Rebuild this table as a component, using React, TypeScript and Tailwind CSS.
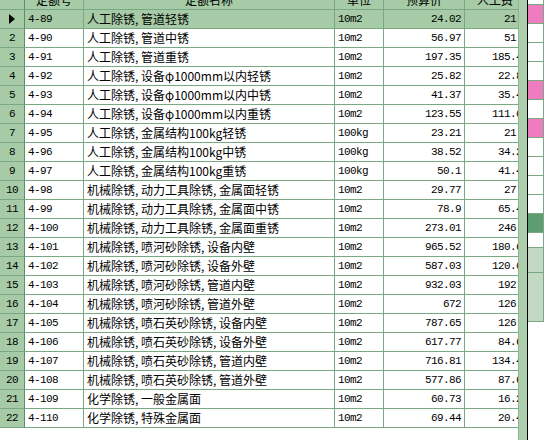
import React from 'react';

type Row = {
  code: string;
  name: string;
  unit: string;
  price: string;
  labor: string;
};

const rows: Row[] = [
  { code: '4-89', name: '人工除锈, 管道轻锈', unit: '10m2', price: '24.02', labor: '21.3' },
  { code: '4-90', name: '人工除锈, 管道中锈', unit: '10m2', price: '56.97', labor: '51.3' },
  { code: '4-91', name: '人工除锈, 管道重锈', unit: '10m2', price: '197.35', labor: '185.49' },
  { code: '4-92', name: '人工除锈, 设备φ1000mm以内轻锈', unit: '10m2', price: '25.82', labor: '22.85' },
  { code: '4-93', name: '人工除锈, 设备φ1000mm以内中锈', unit: '10m2', price: '41.37', labor: '35.45' },
  { code: '4-94', name: '人工除锈, 设备φ1000mm以内重锈', unit: '10m2', price: '123.55', labor: '111.65' },
  { code: '4-95', name: '人工除锈, 金属结构100kg轻锈', unit: '100kg', price: '23.21', labor: '21.3' },
  { code: '4-96', name: '人工除锈, 金属结构100kg中锈', unit: '100kg', price: '38.52', labor: '34.25' },
  { code: '4-97', name: '人工除锈, 金属结构100kg重锈', unit: '100kg', price: '50.1', labor: '41.45' },
  { code: '4-98', name: '机械除锈, 动力工具除锈, 金属面轻锈', unit: '10m2', price: '29.77', labor: '27.3' },
  { code: '4-99', name: '机械除锈, 动力工具除锈, 金属面中锈', unit: '10m2', price: '78.9', labor: '65.45' },
  { code: '4-100', name: '机械除锈, 动力工具除锈, 金属面重锈', unit: '10m2', price: '273.01', labor: '246.3' },
  { code: '4-101', name: '机械除锈, 喷河砂除锈, 设备内壁', unit: '10m2', price: '965.52', labor: '180.65' },
  { code: '4-102', name: '机械除锈, 喷河砂除锈, 设备外壁', unit: '10m2', price: '587.03', labor: '120.65' },
  { code: '4-103', name: '机械除锈, 喷河砂除锈, 管道内壁', unit: '10m2', price: '932.03', labor: '192.3' },
  { code: '4-104', name: '机械除锈, 喷河砂除锈, 管道外壁', unit: '10m2', price: '672', labor: '126.3' },
  { code: '4-105', name: '机械除锈, 喷石英砂除锈, 设备内壁', unit: '10m2', price: '787.65', labor: '126.3' },
  { code: '4-106', name: '机械除锈, 喷石英砂除锈, 设备外壁', unit: '10m2', price: '617.77', labor: '84.65' },
  { code: '4-107', name: '机械除锈, 喷石英砂除锈, 管道内壁', unit: '10m2', price: '716.81', labor: '134.45' },
  { code: '4-108', name: '机械除锈, 喷石英砂除锈, 管道外壁', unit: '10m2', price: '577.86', labor: '87.65' },
  { code: '4-109', name: '化学除锈, 一般金属面', unit: '10m2', price: '60.73', labor: '16.25' },
  { code: '4-110', name: '化学除锈, 特殊金属面', unit: '10m2', price: '69.44', labor: '20.45' },
];

// right-hand strip of the window behind: [height, fill]
const sideCells: [number, string][] = [
  [5, 'bg-white'],
  [19, 'bg-[#f07cc0]'],
  [19, 'bg-white'],
  [19, 'bg-white'],
  [19, 'bg-white'],
  [19, 'bg-[#f07cc0]'],
  [19, 'bg-white'],
  [19, 'bg-[#f07cc0]'],
  [19, 'bg-white'],
  [19, 'bg-white'],
  [19, 'bg-white'],
  [19, 'bg-white'],
  [19, 'bg-[#5c9e70]'],
  [15, 'bg-white'],
  [25, 'bg-[#c3d9c3]'],
  [49, 'bg-[#c3d9c3]'],
];

const mono = "font-['Liberation_Mono',monospace] text-[11px] tracking-[-0.6px]";
const cjk = "font-['Noto_Sans_CJK_SC',sans-serif] text-[12px]";
const line = 'border-[#7aa882]';

function Header() {
  const cell = `h-[19px] shrink-0 flex items-end justify-center pb-[2px] border-r border-b ${line} ${cjk} leading-[14px] text-black`;
  return (
    <div className="flex bg-[#a6cba6]">
      <div className={`${cell} w-[25px] border-r-[#5d8f66]`} />
      <div className={`${cell} w-[59px]`}>定额号</div>
      <div className={`${cell} w-[251px]`}>定额名称</div>
      <div className={`${cell} w-[49px]`}>单位</div>
      <div className={`${cell} w-[81px]`}>预算价</div>
      <div className={`${cell} w-[69px] justify-start pl-[12px]`}>人工费</div>
    </div>
  );
}

function GridRow({ row, index }: { row: Row; index: number }) {
  const selected = index === 0;
  const cell = `h-[19px] shrink-0 flex items-center border-r border-b ${line} overflow-hidden whitespace-nowrap`;
  return (
    <div className={`flex text-black ${selected ? 'bg-[#a6cba6]' : 'bg-white'}`}>
      <div className={`${cell} w-[25px] justify-center bg-[#a6cba6] border-r-[#5d8f66] ${mono}`}>
        {selected ? (
          <svg width="6" height="10" viewBox="0 0 6 10">
            <polygon points="0,0 6,5 0,10" fill="#000" />
          </svg>
        ) : (
          index + 1
        )}
      </div>
      <div className={`${cell} w-[59px] pl-[3px] ${mono}`}>{row.code}</div>
      <div className={`${cell} w-[251px] pl-[3px] ${cjk}`}>{row.name}</div>
      <div className={`${cell} w-[49px] pl-[3px] ${mono}`}>{row.unit}</div>
      <div className={`${cell} w-[81px] justify-end pr-[3px] ${mono}`}>{row.price}</div>
      <div className={`${cell} w-[69px] justify-end pr-[5px] ${mono}`}>{row.labor}</div>
    </div>
  );
}

export default function App() {
  return (
    <div className="w-[546px] h-[440px] overflow-hidden bg-white flex">
      <div className="w-[518px] h-[440px] overflow-hidden shrink-0">
        <div className="-mt-[9px] w-[534px]">
          <Header />
          {rows.map((r, i) => (
            <GridRow key={r.code} row={r} index={i} />
          ))}
        </div>
      </div>
      <div className="w-[9px] h-[440px] shrink-0 bg-[#aecfae] border-l border-[#8db58d]" />
      <div className="w-[1px] h-[440px] shrink-0 bg-black" />
      <div className="flex-1 h-[440px] flex flex-col bg-white">
        {sideCells.map(([h, fill], i) => (
          <div
            key={i}
            style={{ height: h }}
            className={`shrink-0 w-[16px] border-b border-r ${line} ${fill}`}
          />
        ))}
      </div>
    </div>
  );
}
